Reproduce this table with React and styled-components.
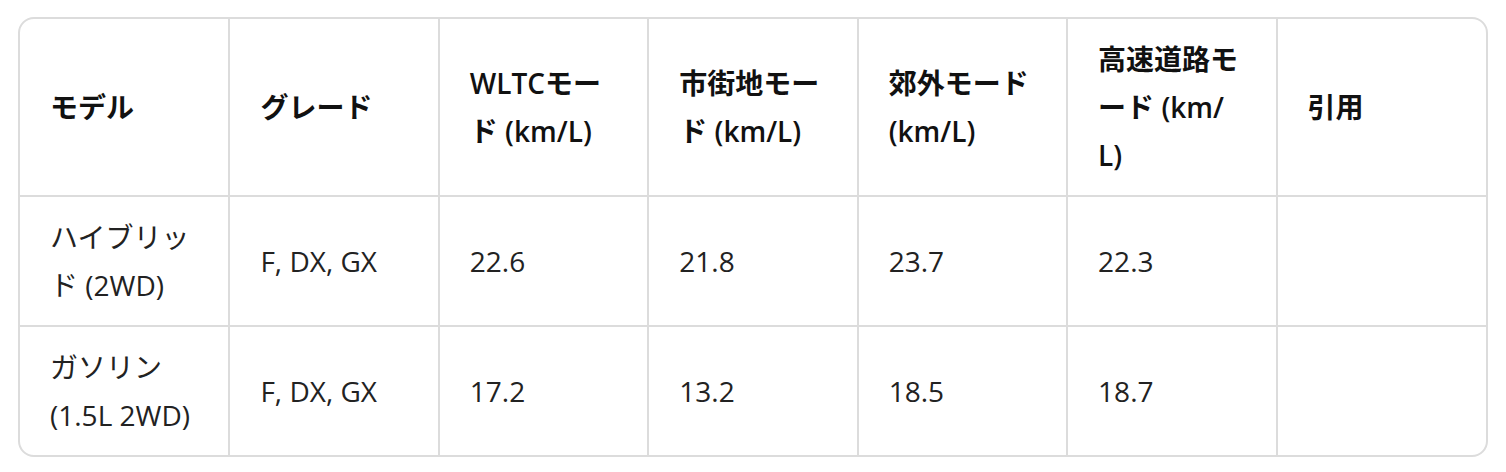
import React from 'react'
import styled, { createGlobalStyle } from 'styled-components'

const GlobalStyle = createGlobalStyle`
  body {
    margin: 0;
    background: #ffffff;
    font-family: "Open Sans", "Noto Sans CJK JP", sans-serif;
  }
`

const Page = styled.div`
  padding: 17px 18px;
`

const Frame = styled.div`
  width: 1470px;
  box-sizing: border-box;
  border: 2px solid #dcdcdc;
  border-radius: 16px;
  overflow: hidden;
`

const Table = styled.table`
  width: 100%;
  table-layout: fixed;
  border-collapse: collapse;
  font-size: 28px;
  line-height: 48px;
  color: #222;
`

const Cell = styled.td`
  padding: 16px 32px 16px 30px;
  vertical-align: middle;
  text-align: left;
  border-right: 2px solid #dcdcdc;
  border-bottom: 2px solid #dcdcdc;
  font-weight: ${({ $head }) => ($head ? 600 : 400)};
  color: ${({ $head }) => ($head ? '#111' : '#222')};
  word-break: break-all;

  &:last-child {
    border-right: none;
  }
`

const Row = styled.tr`
  &:last-child td {
    border-bottom: none;
  }
`

const headers = ['モデル', 'グレード', 'WLTCモード (km/L)', '市街地モード (km/L)', '郊外モード (km/L)', '高速道路モード (km/L)', '引用']

const rows = [
  ['ハイブリッド (2WD)', 'F, DX, GX', '22.6', '21.8', '23.7', '22.3', ''],
  ['ガソリン (1.5L 2WD)', 'F, DX, GX', '17.2', '13.2', '18.5', '18.7', ''],
]

const App = () => {
  return (
    <Page>
      <GlobalStyle />
      <Frame>
        <Table>
          <thead>
            <Row>
              {headers.map((h) => (
                <Cell as="th" $head key={h}>{h}</Cell>
              ))}
            </Row>
          </thead>
          <tbody>
            {rows.map((r, i) => (
              <Row key={i}>
                {r.map((c, j) => (
                  <Cell key={j}>{c}</Cell>
                ))}
              </Row>
            ))}
          </tbody>
        </Table>
      </Frame>
    </Page>
  )
}

export default App
